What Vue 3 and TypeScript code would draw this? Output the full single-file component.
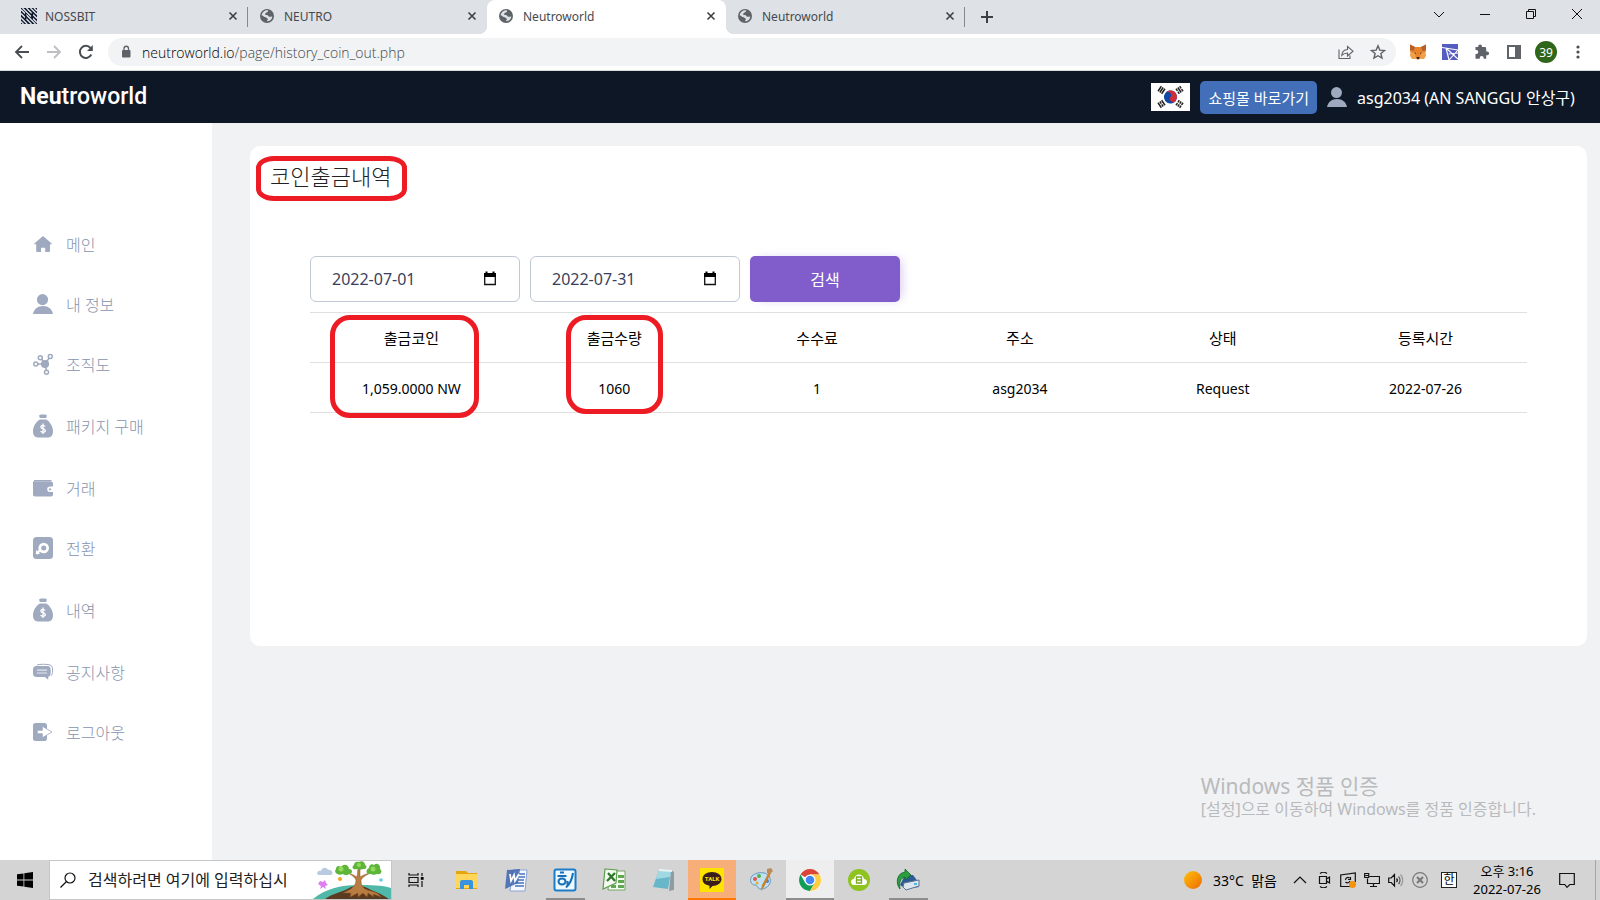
<script setup lang="ts">
import { ref } from 'vue'

interface Tab { title: string; icon: 'nossbit' | 'globe'; active: boolean }
interface MenuItem { label: string; icon: string; tall?: boolean }
interface Withdrawal { coin: string; amount: string; fee: string; address: string; status: string; date: string }

const tabs: Tab[] = [
  { title: 'NOSSBIT', icon: 'nossbit', active: false },
  { title: 'NEUTRO', icon: 'globe', active: false },
  { title: 'Neutroworld', icon: 'globe', active: true },
  { title: 'Neutroworld', icon: 'globe', active: false },
]

const menu: MenuItem[] = [
  { label: '메인', icon: 'home' },
  { label: '내 정보', icon: 'user' },
  { label: '조직도', icon: 'network' },
  { label: '패키지 구매', icon: 'bag', tall: true },
  { label: '거래', icon: 'wallet' },
  { label: '전환', icon: 'swap' },
  { label: '내역', icon: 'bag', tall: true },
  { label: '공지사항', icon: 'chat' },
  { label: '로그아웃', icon: 'logout' },
]

const headers: string[] = ['출금코인', '출금수량', '수수료', '주소', '상태', '등록시간']
const rows: Withdrawal[] = [
  { coin: '1,059.0000 NW', amount: '1060', fee: '1', address: 'asg2034', status: 'Request', date: '2022-07-26' },
]

const url = ref('/page/history_coin_out.php')
const from = ref('2022-07-01')
const to = ref('2022-07-31')
</script>

<template>
  <div class="screen">
    <header class="tabstrip">
      <div v-for="(tab, i) in tabs" :key="i" class="tab" :class="{ active: tab.active, divided: i === 0 || i === 3 }">
        <svg v-if="tab.icon === 'nossbit'" class="favicon" viewBox="0 0 16 16" aria-hidden="true">
          <rect width="16" height="16" fill="#101a30" />
          <path d="M0 1.500L14.500 16M1.500 0L10 8.500M5.500 0L11 5.500M11 9.500L16 14.500M0 5.500L5 10.500M5 10.500L10.500 16M0 9.800L6.200 16M0 13.500L2.500 16M9.500 0L16 6.500M13 0L16 3M12 6.500L16 10.500" stroke="#e6e9ee" stroke-width="1.300" />
          <path d="M4.700 5v6.500M11.300 4.500V11" stroke="#101a30" stroke-width="1.500" />
        </svg>
        <svg v-else class="favicon" viewBox="0 0 16 16" aria-hidden="true">
          <circle cx="7" cy="8" r="7" fill="#5f6368" />
          <path d="M7.500 2.300c1.500 1-.2 2-1.300 2.300-.4 1-1.200 1.100-1.200 1.700.1.900 1.800.600 2.600.9 1.100.4.7 1.500 1.800 1.600 1 .1 1.800-.500 2.900-.4-.2 2.800-2.400 4.800-5.200 4.900 0-.900.2-1.300.9-1.700.3-1-1-1.200-1.500-1.800-.8-.9-2.700-.5-3-1.600-.2-.5-.7-.7-1.800-.6C1.900 4.800 4.200 2.100 7.500 2.300z" fill="#dee1e6" />
        </svg>
        <span class="tab-title">{{ tab.title }}</span>
        <button class="tab-close" aria-label="탭 닫기">
          <svg viewBox="0 0 16 16"><path d="M4.500 4.500l7 7M11.500 4.500l-7 7" stroke="#3c4043" stroke-width="1.600" /></svg>
        </button>
      </div>
      <button class="new-tab" aria-label="새 탭">
        <svg viewBox="0 0 16 16"><path d="M8 2v12M2 8h12" stroke="#3c4043" stroke-width="2" /></svg>
      </button>
      <div class="window-buttons">
        <button aria-label="탭 검색"><svg viewBox="0 0 16 16"><path d="M3 6l5 5 5-5" /></svg></button>
        <button aria-label="최소화"><svg viewBox="0 0 16 16"><path d="M3 8.500h10" /></svg></button>
        <button aria-label="이전 크기로"><svg viewBox="0 0 16 16"><path d="M3.500 5.500h7v7h-7zM5.500 5.500v-2h7v7h-2" /></svg></button>
        <button aria-label="닫기"><svg viewBox="0 0 16 16"><path d="M3 3l10 10M13 3L3 13" /></svg></button>
      </div>
    </header>

    <nav class="toolbar" aria-label="브라우저 도구 모음">
      <button aria-label="뒤로"><svg viewBox="0 0 16 16"><path d="M15 8H2M8 2L2 8l6 6" fill="none" stroke="#4b4f53" stroke-width="1.800" /></svg></button>
      <button aria-label="앞으로"><svg viewBox="0 0 16 16"><path d="M1 8h13M8 2l6 6-6 6" fill="none" stroke="#bdbfc2" stroke-width="1.800" /></svg></button>
      <button aria-label="새로고침">
        <svg viewBox="0 0 16 16"><path d="M13.300 10.500A6 6 0 1 1 12.500 4" fill="none" stroke="#4b4f53" stroke-width="2" /><path d="M14.800 1v6H9z" fill="#4b4f53" /></svg>
      </button>
      <div class="omnibox">
        <svg class="lock" viewBox="0 0 12 14" aria-hidden="true"><rect x="2" y="5" width="8.500" height="7.500" rx="1" fill="#5f6368" /><path d="M4 5.500V3.500a2.250 2.250 0 0 1 4.500 0v2" fill="none" stroke="#5f6368" stroke-width="1.300" /></svg>
        <span class="host">neutroworld.io</span>
        <input v-model="url" class="path" aria-label="주소" />
        <button aria-label="공유"><svg viewBox="0 0 16 16"><path d="M1 5.500v9h11v-3M9.500 2.500v3C6 5.700 4 8 3.800 11.500 5.500 9.500 7 9 9.500 9v3l5.500-4.800z" fill="none" stroke="#5f6368" stroke-width="1.100" /></svg></button>
        <button aria-label="북마크"><svg viewBox="0 0 16 16"><path d="M8 1.800l1.800 4.300 4.700.4-3.600 3 1.100 4.600L8 11.700l-4 2.400 1.100-4.600-3.600-3 4.700-.4z" fill="none" stroke="#5f6368" stroke-width="1.400" /></svg></button>
      </div>
      <div class="extensions">
        <button aria-label="지갑">
          <svg viewBox="0 0 16 16">
            <path d="M0 .5l5 2.500h6l5-2.500v6.500l-.8 2 .5 3-2 3-3.700-.5-1 1H7l-1-1-3.700.5-2-3 .5-3L0 7z" fill="#e8832a" />
            <path d="M0 .5l5 2.500-1.500 4L0 6zM16 .5l-5 2.500 1.500 4L16 6z" fill="#b5602a" /><path d="M1 8l4 1 1 5-4 1-2-4zM15 8l-4 1-1 5 4 1 2-4z" fill="#f0a04b" />
            <path d="M6.500 13h3L9 15H7z" fill="#312824" /><path d="M4 8.500l2 .6-.5 1zM12 8.500l-2 .6.5 1z" fill="#1f2a38" />
          </svg>
        </button>
        <button aria-label="확장 지갑">
          <svg viewBox="0 0 16 16"><rect width="16" height="16" fill="#555dc0" /><path d="M0 3.500l16 2.500M4 4l12 11M4 4l3 12M7 16l9-10M6.500 10L16 9" fill="none" stroke="#fff" stroke-width="1.100" /></svg>
        </button>
        <button aria-label="확장 프로그램">
          <svg viewBox="0 0 16 16"><path d="M13.200 7.400h-1V4.500c0-.8-.6-1.400-1.400-1.400H8V2.400a1.900 1.900 0 0 0-3.800 0v.7H1.500v3h.8a2 2 0 0 1 0 4h-.8v4.700h4.200v-.9a2 2 0 0 1 4 0v.9h2.500v-3.600h1a1.900 1.900 0 0 0 0-3.800z" fill="#5f6368" /></svg>
        </button>
        <button aria-label="측면 패널"><svg viewBox="0 0 16 16"><path d="M1 1h14v14H1zM3 3v10h6V3z" fill="#5f6368" fill-rule="evenodd" /></svg></button>
        <button class="profile" aria-label="프로필">39</button>
        <button aria-label="메뉴"><svg viewBox="0 0 16 16"><g fill="#4b4f53"><circle cx="8" cy="3" r="1.600" /><circle cx="8" cy="8" r="1.600" /><circle cx="8" cy="13" r="1.600" /></g></svg></button>
      </div>
    </nav>

    <header class="site-header">
      <a class="brand" href="#"><b>Neu</b>troworld</a>
      <div class="account">
        <button class="flag" aria-label="한국어">
          <svg viewBox="0 0 39 28">
            <rect width="39" height="28" fill="#fff" />
            <g transform="rotate(34 19.500 14)">
              <circle cx="19.500" cy="14" r="6.500" fill="#0f49a5" />
              <path d="M13 14a6.500 6.500 0 0 1 13 0 3.250 3.250 0 0 1-6.500 0 3.250 3.250 0 0 0-6.500 0z" fill="#cd2e3a" />
            </g>
            <g stroke="#222" stroke-width="1.500">
              <path transform="translate(10.500 7) rotate(-56)" d="M-3-2.200h6M-3 0h6M-3 2.200h6" />
              <path transform="translate(28.500 21) rotate(-56)" d="M-3-2.200h2.600M.4-2.200H3M-3 0h2.600M.4 0H3M-3 2.200h2.600M.4 2.200H3" />
              <path transform="translate(28.500 7) rotate(56)" d="M-3-2.200h2.600M.4-2.200H3M-3 0h6M-3 2.200h2.600M.4 2.200H3" />
              <path transform="translate(10.500 21) rotate(56)" d="M-3-2.200h6M-3 0h2.600M.4 0H3M-3 2.200h6" />
            </g>
          </svg>
        </button>
        <button class="shop">쇼핑몰 바로가기</button>
        <svg class="avatar" viewBox="0 0 20 20" aria-hidden="true"><circle cx="9.500" cy="5.600" r="5.500" fill="#9fa9bf" /><path d="M0 20c1-5 4.500-8 10-8s9 3 10 8z" fill="#9fa9bf" /></svg>
        <span class="user">asg2034 (AN SANGGU 안상구)</span>
      </div>
    </header>

    <div class="body">
      <nav class="sidebar" aria-label="주 메뉴">
        <a v-for="item in menu" :key="item.label" href="#" class="menu-item" :class="{ tall: item.tall }">
          <svg class="menu-icon" viewBox="0 0 20 24" fill="#9fa9bf" aria-hidden="true">
            <path v-if="item.icon === 'home'" d="M10 4l8.700 7.400c.4.4.1.900-.5.900H17v6.200c0 1-.6 1.500-1.500 1.500h-3.300v-4.300H8V20H4.700c-.9 0-1.500-.5-1.500-1.500v-6.200H1.800c-.6 0-.9-.5-.5-.9z" />
            <template v-else-if="item.icon === 'user'"><circle cx="9.500" cy="7.600" r="5.600" /><path d="M0 22c1-5 4.500-8 10-8s9 3 10 8z" /></template>
            <g v-else-if="item.icon === 'network'" stroke="#9fa9bf" stroke-width="1.500">
              <path d="M4 12h8l5-7M8 6l4 6 1.500 7" fill="none" /><circle cx="12" cy="12" r="3.300" />
              <g fill="#fff"><circle cx="2.800" cy="12" r="2" /><circle cx="7.300" cy="5.800" r="2" /><circle cx="17.300" cy="4.500" r="2" /><circle cx="13.500" cy="20.200" r="2" /></g>
            </g>
            <template v-else-if="item.icon === 'bag'">
              <path d="M6 1.500c1.300-.9 2.300-.9 4-.9s2.700 0 4 .9l-.8 2.500H6.800zM6.800 5.400h6.400C17 7.500 20 12.500 20 17c0 4.500-2 6.500-5.500 6.500h-9C2 23.500 0 21.500 0 17 0 12.500 3 7.500 6.800 5.400z" />
              <path d="M12.200 12.500c-.4-.9-1.100-1.200-2.200-1.200-1.300 0-2.100.6-2.100 1.600 0 2.300 4.400 1.200 4.400 3.600 0 1.100-.9 1.800-2.300 1.800-1.200 0-2-.5-2.400-1.400M10 9.500v10.500" fill="none" stroke="#fff" stroke-width="1.300" />
            </template>
            <template v-else-if="item.icon === 'wallet'">
              <path d="M1 4h17.500v1H1zM0 5.200h17c2 0 3 .8 3 3v2.300h-3a2.800 2.800 0 0 0 0 5.600h3v2.400c0 1.200-.8 2-2 2H2c-1.200 0-2-.8-2-2z" /><circle cx="17" cy="13.300" r="1.100" />
            </template>
            <template v-else-if="item.icon === 'swap'">
              <rect y="1" width="20" height="22" rx="3.500" /><path d="M3.500 18l3-3.500" stroke="#fff" stroke-width="2.500" /><circle cx="10.700" cy="12" r="3.900" fill="none" stroke="#fff" stroke-width="2.800" /><path d="M3 14v4h4z" fill="#fff" />
            </template>
            <template v-else-if="item.icon === 'chat'">
              <path d="M4 5c3-1 10-1 13 0 2.300.9 2.800 3 2.600 6-.1 2.300-.6 3.800-1.600 4.800" fill="none" stroke="#9fa9bf" stroke-width="1" />
              <path d="M3.500 6h10.700c2.500 0 3.500 1.500 3.500 4v2.500c0 2.300-.8 3.800-2.500 4.400v2.800L11.800 17H3.500C1 17 0 15.500 0 13V9.800C0 7.500 1 6 3.500 6z" /><path d="M4 10.200h10M4 13h10" stroke="#e4e7ee" stroke-width="1.200" />
            </template>
            <template v-else>
              <rect y="3" width="14" height="18" rx="2.800" /><path d="M4.300 10.300h5V6.200L19 12l-9.700 5.800v-4.100h-5z" fill="#fff" stroke="#9fa9bf" stroke-width=".8" />
            </template>
          </svg>
          <span>{{ item.label }}</span>
        </a>
      </nav>

      <main class="content">
        <section class="card">
          <h1>코인출금내역</h1>
          <form class="filters" @submit.prevent>
            <label class="date">
              <input v-model="from" type="text" aria-label="시작일" />
              <svg viewBox="0 0 14 16" aria-hidden="true"><path d="M1.700 3h10.600v10.500H1.700z" fill="none" stroke="#111" stroke-width="1.300" /><path d="M1 2h12v4H1zM2.500.5h2V2h-2zM9.500.5h2V2h-2z" /></svg>
            </label>
            <label class="date">
              <input v-model="to" type="text" aria-label="종료일" />
              <svg viewBox="0 0 14 16" aria-hidden="true"><path d="M1.700 3h10.600v10.500H1.700z" fill="none" stroke="#111" stroke-width="1.300" /><path d="M1 2h12v4H1zM2.500.5h2V2h-2zM9.500.5h2V2h-2z" /></svg>
            </label>
            <button class="search" type="submit">검색</button>
          </form>
          <table>
            <thead><tr><th v-for="h in headers" :key="h" scope="col">{{ h }}</th></tr></thead>
            <tbody>
              <tr v-for="r in rows" :key="r.date + r.amount">
                <td>{{ r.coin }}</td><td>{{ r.amount }}</td><td>{{ r.fee }}</td><td>{{ r.address }}</td><td>{{ r.status }}</td><td>{{ r.date }}</td>
              </tr>
            </tbody>
          </table>
          <div class="mark mark-title"></div>
          <div class="mark mark-coin"></div>
          <div class="mark mark-amount"></div>
        </section>
        <div class="activation">
          <p class="activation-title">Windows 정품 인증</p>
          <p>[설정]으로 이동하여 Windows를 정품 인증합니다.</p>
        </div>
      </main>
    </div>

    <footer class="taskbar">
      <button class="start" aria-label="시작"><svg viewBox="0 0 16 16"><path d="M0 2.300L6.500 1.400v6.200H0zM7.300 1.300L16 0v7.600H7.300zM0 8.400h6.500v6.200L0 13.700zM7.300 8.400H16V16l-8.700-1.300z" /></svg></button>
      <label class="find">
        <svg class="glass" viewBox="0 0 16 16" aria-hidden="true"><circle cx="10" cy="6" r="5" fill="none" stroke="#111" stroke-width="1.200" /><path d="M6.500 9.500L.5 15.500" stroke="#111" stroke-width="1.300" /></svg>
        <input type="text" placeholder="검색하려면 여기에 입력하십시" aria-label="검색" />
        <svg class="scene" viewBox="0 0 78 38" aria-hidden="true">
          <path d="M0 38c12-10 28-14 44-14 14 0 25 0 34 3v11z" fill="#4fb8a8" />
          <path d="M12 38c8-6 18-7 26-12 8-2 14-1 20 3 6 2 12 5 18 9z" fill="#5a3a20" />
          <path d="M30 32c6-3 12-5 13-12 0-3-3-5-8-8 4 1 7 3 9 4l1-8 2 0 0 8c3-2 6-3 10-4-5 3-9 5-9 8 0 6 4 9 10 10 5 1 8 3 10 6l-8-3 1 3-6-4-1 4-4-4-5 4 0-4-8 4 1-4z" fill="#b97d42" stroke="#8a5526" stroke-width=".5" />
          <g fill="#5fb53a"><path d="M23 8c0-3 3-4 5-2 3-4 8-2 8 2 4 0 4 5 0 5-2 2-5 1-6 0-5 2-10-1-7-5zM41 4c0-3 3-4 5-3 3-2 6 0 6 3 3 1 1 5-2 4-2 1-4 1-6 0-4 1-6-2-3-4zM56 7c0-3 3-5 5-3 3-3 7 0 6 4 3 2 1 6-3 5-2 1-5 1-6 0-5 1-6-4-2-6z" /></g>
          <g fill="#93d95a"><circle cx="28" cy="8" r="2.500" /><circle cx="46" cy="4" r="2" /><circle cx="60" cy="8" r="2.500" /></g>
          <path d="M5 14c-2-2 0-5 3-4 1-4 6-4 7-1 4-1 6 4 3 5z" fill="#b9cbe0" /><path d="M7 20l3 1 2-2 1 3 2 2-3 1 1 3-3-2-3 2 1-3-3-2z" fill="#dc7df0" />
          <circle cx="27" cy="18" r="2" fill="#f6a41c" /><circle cx="68" cy="19" r="1.800" fill="#62cdea" />
        </svg>
      </label>
      <button class="app taskview" aria-label="작업 보기"><svg class="small" viewBox="0 0 16 16"><path d="M1 1v2h9V1M1 5.500h9v5H1zM1 15v-2h9v2M14 1v3M14 9v6" fill="none" stroke="#111" stroke-width="1.200" /><rect x="12.800" y="5" width="2.800" height="2.800" /></svg></button>
      <button class="app" aria-label="파일 탐색기"><svg viewBox="0 0 24 24"><path d="M1 3h10l2 2h9v16H1z" fill="#e5a50f" /><path d="M1 6h21v14H1z" fill="#ffd65c" /><path d="M5 21v-7c0-1 .7-2 2-2h9c1.300 0 2 1 2 2v7h-4v-4H9v4z" fill="#3793dd" /></svg></button>
      <button class="app" aria-label="Word"><svg viewBox="0 0 24 24"><path d="M9 2h14l-2 21H6z" fill="#f5f8ff" stroke="#8aa4d2" /><path d="M15 6h6M15 9h6M14 12h6M11 15h9M11 18h9" stroke="#4771bd" stroke-width="1.500" /><path d="M3 2l13-1-2 14-13 6z" fill="#3c64b0" opacity=".85" /><path d="M6 6l1 7 3-6 1 6 4-7" fill="none" stroke="#fff" stroke-width="1.700" /></svg></button>
      <button class="app running" aria-label="한글"><svg viewBox="0 0 24 24"><rect x="1.500" y="1.500" width="21" height="21" rx="2" fill="#eef8ff" stroke="#1c7cc7" stroke-width="2" /><path d="M7 4.500h4M4.500 8h9M20 5c-1 7-3 11-7 14.500M14.500 18v-5" fill="none" stroke="#176fb7" stroke-width="2" /><ellipse cx="9" cy="13.500" rx="3.500" ry="3" fill="none" stroke="#176fb7" stroke-width="2" /></svg></button>
      <button class="app" aria-label="Excel"><svg viewBox="0 0 24 24"><path d="M8 3h15v19H6z" fill="#f4fbf0" stroke="#78a36b" /><path d="M16 7h6v3h-6zM16 12h6v3h-6zM9 17h5v3H9zM16 17h6v3h-6z" fill="#62a653" /><path d="M3 1l12 1-1 13-13 6z" fill="#f4faf1" stroke="#5ba04f" stroke-width="1.200" /><path d="M6 5l7 8M13 5l-8 8" stroke="#2d772b" stroke-width="2.300" /></svg></button>
      <button class="app" aria-label="메모장"><svg viewBox="0 0 24 24"><path d="M20 2l3 2v18l-5 1z" fill="#8e9da4" /><path d="M8 2l12 1-3 18-15-2z" fill="#67b6ca" /><path d="M8 2l12 1-1 6L5 11z" fill="#a0d9e3" /><path d="M8 2l13 1" stroke="#e9f2f2" stroke-width="2" /></svg></button>
      <button class="app alert" aria-label="카카오톡"><svg viewBox="0 0 24 24"><rect width="24" height="24" fill="#ffe300" /><path d="M12 4c5.500 0 9.500 3 9.500 7s-4 7-9 7l-3 3v-3.300C5 17 2.500 14.500 2.500 11c0-4 4-7 9.500-7z" fill="#3a1d1d" /><text x="12" y="13" text-anchor="middle" class="talk">TALK</text></svg></button>
      <button class="app" aria-label="그림판"><svg viewBox="0 0 24 24"><path d="M3 8C7 4 16 3 20 8c4 6-1 13-8 13-4 0-3-4-6-4-4 0-6-5-3-9z" fill="#bfe1f4" stroke="#6699bd" /><circle cx="6" cy="11" r="2" fill="#e2564c" /><circle cx="10" cy="8" r="2" fill="#57ae4a" /><circle cx="8" cy="15" r="1.500" fill="#f2aa2b" /><circle cx="18" cy="13" r="2" fill="#4b7ed4" /><path d="M20 4l2 1-7 14-3 4 1-6z" fill="#c9812f" /><path d="M18 1l4-1 2 3-3 3-3-1z" fill="#bd8a5b" /></svg></button>
      <button class="app current" aria-label="Chrome">
        <svg viewBox="0 0 24 24"><circle cx="12" cy="12" r="11" fill="#fff" /><path d="M12 12L2.500 6.500A11 11 0 0 1 21.500 6.500H12z" fill="#db4437" /><path d="M2.500 6.500A11 11 0 0 0 12 23l4.800-8.300L12 12 7.200 14.700z" fill="#109d58" /><path d="M21.500 6.500A11 11 0 0 1 12 23l4.800-8.300L12 6.500z" fill="#ffcd41" /><circle cx="12" cy="12" r="5.500" fill="#fff" /><circle cx="12" cy="12" r="4.300" fill="#4285f4" /></svg>
      </button>
      <button class="app" aria-label="클라우드"><svg viewBox="0 0 24 24"><circle cx="12" cy="12" r="11" fill="#8fc31f" /><path d="M7 17c-4 0-4-6 0-6 1-6 9-6 10 0 4 0 4 6 0 6z" fill="#fff" /><path d="M9.500 9h5v6h-5zM9.500 12h5" fill="none" stroke="#79ac18" stroke-width="1.300" /></svg></button>
      <button class="app running" aria-label="드라이브"><svg viewBox="0 0 24 24"><path d="M9 7l8 0 6 8v4l-13 2-6-4z" fill="#2c5c91" /><path d="M8 15l15-3v6l-13 4-3-3z" fill="#dce6ef" stroke="#5b7593" /><path d="M18 16h3" stroke="#28a3e0" stroke-width="1.500" /><path d="M4 21C-1 15 1 5 9 4V1l6 6-6 5V9c-5 1-6 6-5 12z" fill="#2b9f3d" stroke="#11662b" stroke-width=".8" /></svg></button>

      <div class="tray">
        <button class="weather"><svg viewBox="0 0 18 18"><defs><linearGradient id="sun" x1="0" y1="0" x2="1" y2="1"><stop offset="0" stop-color="#ffc20a" /><stop offset="1" stop-color="#ec6a06" /></linearGradient></defs><circle cx="9" cy="9" r="9" fill="url(#sun)" /></svg><span>33°C&nbsp; 맑음</span></button>
        <div class="tray-icons">
          <button aria-label="숨겨진 아이콘"><svg viewBox="0 0 16 16"><path d="M2 11l6-6 6 6" /></svg></button>
          <button aria-label="카메라"><svg viewBox="0 0 16 16"><path d="M3.500 4.500h7v7h-7zM10.500 7l3-2v6l-3-2M4 1.500C6 0 9 0 11 1.500M4 14.500c2 1.500 5 1.500 7 0" /></svg></button>
          <button aria-label="업데이트"><svg viewBox="0 0 16 16"><path d="M12 14.500H.7V3l14.600-2v9M9.500 6c-2-1.500-4 0-4 2m5-3v2.500H8M5.500 10c1.500 1.500 4 1 4.500-1.200" /><circle cx="12.500" cy="12.500" r="3.500" class="dot" /></svg></button>
          <button aria-label="네트워크"><svg viewBox="0 0 16 16"><path d="M5.500 4.500h10v7H3.500v-5M9.500 11.500v3M6 14.500h7M.7 1.500h4v4h-4zM1.500 3.500h2.500" /></svg></button>
          <button aria-label="볼륨"><svg viewBox="0 0 16 16"><path d="M.7 6v4.500h2.500L6.500 14V2.500L3.200 6zM8.500 6.500c1 1 1 2.500 0 3.500" /><path d="M10.500 4.500c2 2 2 5.500 0 7.500" stroke="#555" /><path d="M12.500 2.500c3 3 3 8.500 0 11.500" stroke="#999" /></svg></button>
          <button aria-label="상태"><svg viewBox="0 0 16 16"><circle cx="8" cy="8" r="7.300" stroke="#777" /><path d="M5 5l6 6M11 5l-6 6" stroke="#777" stroke-width="2" /></svg></button>
        </div>
        <button class="ime">한</button>
        <button class="clock"><span>오후 3:16</span><span>2022-07-26</span></button>
        <button class="notice" aria-label="알림"><svg viewBox="0 0 16 16"><path d="M.7 1.500h14.600v11h-4.500L8 15.300 5.800 12.500H.7z" /></svg></button>
        <span class="desktop-edge"></span>
      </div>
    </footer>
  </div>
</template>

<style>
body { margin: 0; }
</style>

<style scoped>
* { box-sizing: border-box; }
button { border: 0; padding: 0; background: none; font: inherit; color: inherit; display: flex; align-items: center; justify-content: center; flex: none; }
input { border: 0; outline: 0; background: none; font: inherit; color: inherit; min-width: 0; padding: 0; }
a { color: inherit; text-decoration: none; }
svg { display: block; flex: none; }
.screen { min-height: 100vh; display: flex; flex-direction: column; font-family: "Noto Sans", "Noto Sans CJK KR", sans-serif; font-size: 14px; color: #000; background: #fff; }

.tabstrip { height: 34px; background: #dee1e6; display: flex; align-items: stretch; padding-left: 9px; }
.tab { width: 239px; display: flex; align-items: center; gap: 8px; padding: 0 7px 2px 12px; font-size: 12px; color: #45494d; position: relative; }
.tab.active { background: #fff; border-radius: 8px 8px 0 0; }
.tab.active::before, .tab.active::after { content: ""; position: absolute; bottom: 0; width: 8px; height: 8px; }
.tab.active::before { left: -8px; background: radial-gradient(circle at 0 0, transparent 8px, #fff 8px); }
.tab.active::after { right: -8px; background: radial-gradient(circle at 100% 0, transparent 8px, #fff 8px); }
.tab.divided::after { content: ""; position: absolute; right: 0; top: 7px; width: 1px; height: 20px; background: #85888d; }
.favicon { width: 16px; height: 16px; }
.tab-title { flex: 1; }
.tab-close svg, .new-tab svg { width: 16px; height: 16px; }
.new-tab { width: 44px; }
.window-buttons { margin-left: auto; display: flex; padding-bottom: 6px; }
.window-buttons button { width: 46px; }
.window-buttons svg { width: 16px; height: 16px; fill: none; stroke: #111; stroke-width: 1; }

.toolbar { height: 37px; display: flex; align-items: center; padding: 0 14px; gap: 16px; border-bottom: 1px solid #d5dcda; }
.toolbar svg { width: 16px; height: 16px; }
.omnibox { flex: 1; height: 28px; display: flex; align-items: center; border-radius: 14px; background: #f1f3f4; padding: 0 10px 0 12px; margin-left: -2px; font-family: "Open Sans", "Noto Sans", sans-serif; font-weight: 300; font-size: 14px; color: #45494d; }
.omnibox .lock { width: 12px; height: 14px; margin-right: 10px; }
.omnibox .host { color: #000; }
.omnibox .path { flex: 1; }
.omnibox button { margin-left: 16px; }
.extensions { display: flex; align-items: center; gap: 16px; margin-left: -2px; }
.extensions .profile { width: 22px; height: 22px; border-radius: 50%; background: #2f661b; color: #fff; font-size: 12px; margin: 0 -3px; }

.site-header { height: 52px; background: #0e1726; color: #fff; display: flex; align-items: center; justify-content: space-between; padding: 0 20px; }
.brand { font-family: Roboto, sans-serif; font-size: 23px; line-height: 28px; font-weight: 500; }
.account { display: flex; align-items: center; gap: 10px; font-size: 16px; }
.flag svg { width: 39px; height: 28px; }
.shop { height: 33px; padding: 0 8px; border-radius: 5px; background: #426fb8; font-size: 15px; }
.avatar { width: 20px; height: 20px; }
.user { min-width: 223px; }

.body { flex: 1; display: flex; }
.sidebar { width: 212px; flex: none; padding-top: 91px; background: #fff; }
.menu-item { height: 60px; display: flex; align-items: center; gap: 13px; padding-left: 33px; font-size: 16px; color: #8793ad; font-weight: 300; }
.menu-item.tall { height: 64px; }
.menu-icon { width: 20px; height: 24px; }
.content { flex: 1; position: relative; background: #f1f2f4; padding: 23px 13px 23px 38px; }
.card { position: relative; min-height: 500px; border-radius: 10px; background: #fff; padding: 14px 60px; }
h1 { margin: 0 0 64px -40px; font-size: 22px; line-height: 32px; font-weight: 300; color: #222; }
.filters { display: flex; gap: 10px; margin-bottom: 10px; }
.date { width: 210px; height: 46px; display: flex; align-items: center; border: 1px solid #bfc9d4; border-radius: 6px; padding: 0 22px 0 21px; font-size: 16px; color: #3b3f5c; }
.date input { flex: 1; }
.date svg { width: 14px; height: 16px; }
.search { width: 150px; height: 46px; border-radius: 5px; background: #805dca; color: #fff; font-size: 16px; box-shadow: 4px 0 12px -4px #c8b9ea; }
table { width: 100%; border-collapse: collapse; table-layout: fixed; }
th, td { height: 50px; padding: 0; border-top: 1px solid #e0e0e0; border-bottom: 1px solid #e0e0e0; text-align: center; font-size: 14px; font-weight: 400; }
th { font-size: 15px; }
td { padding-top: 2px; }
.mark { position: absolute; border: 5px solid #ed1c24; border-radius: 20px; pointer-events: none; }
.mark-title { left: 6px; top: 10px; width: 151px; height: 45px; border-radius: 18px / 12px; }
.mark-coin { left: 80px; top: 169px; width: 149px; height: 103px; }
.mark-amount { left: 316px; top: 169px; width: 97px; height: 99px; }
.activation { position: absolute; right: 64px; bottom: 40px; color: #b9babc; font-size: 16px; line-height: 22px; }
.activation p { margin: 0; }
.activation .activation-title { font-size: 21px; line-height: 24px; }

.taskbar { height: 40px; background: #d4d4d4; display: flex; align-items: stretch; }
.start { width: 49px; }
.start svg { width: 16px; height: 16px; }
.find { width: 343px; display: flex; align-items: center; background: #fff; border: 1px solid #c6c6c6; padding-left: 10px; gap: 12px; font-size: 16px; color: #222; }
.find input { flex: 1; }
.find input::placeholder { color: #222; opacity: 1; }
.find .glass { width: 16px; height: 16px; }
.find .scene { width: 78px; height: 38px; }
.app { width: 48px; margin-right: 1px; border: solid transparent; border-width: 2px 0; position: relative; }
.app.taskview { margin-right: 3px; }
.app svg { width: 24px; height: 24px; }
.app .small { width: 16px; height: 16px; }
.app.running::after { content: ""; position: absolute; left: 5px; right: 4px; bottom: -2px; height: 2px; background: #8d8d8d; }
.app.current { background: #eee; border-bottom-color: #8d8d8d; }
.app.alert { background: #f8ae79; border-bottom-color: #ff7800; }
.talk { font: 700 6px Roboto, sans-serif; fill: #ffe300; }
.tray { margin-left: auto; display: flex; align-items: stretch; }
.tray svg { fill: none; stroke: #111; stroke-width: 1.2; width: 16px; height: 16px; }
.tray .dot { fill: #f7920b; stroke: none; }
.weather { gap: 11px; margin-right: 15px; }
.tray .weather svg { width: 18px; height: 18px; stroke: none; }
.tray-icons { display: flex; gap: 8px; }
.ime { width: 16px; height: 16px; align-self: center; margin-left: 13px; border: 1px solid #222; background: #fff; font-size: 12px; line-height: 14px; }
.clock { width: 100px; flex-direction: column; font-size: 13px; line-height: 18px; }
.notice { width: 20px; }
.desktop-edge { width: 5px; margin-left: 18px; border-left: 1px solid #a5a5a5; }
</style>
